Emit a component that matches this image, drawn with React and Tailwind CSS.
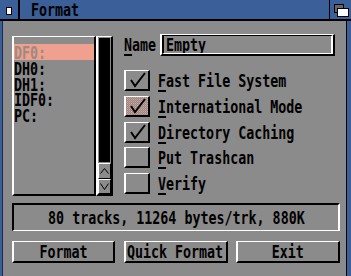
import React from "react";

const Txt = ({ children, center, className = "" }) => (
  <span
    className={`inline-block whitespace-nowrap scale-x-[0.74] ${
      center ? "origin-center" : "origin-left"
    } ${className}`}
  >
    {children}
  </span>
);

const Key = ({ children }) => (
  <span className="underline decoration-2 underline-offset-[3px]">{children}</span>
);

const Check = () => (
  <svg viewBox="0 0 22 18" className="w-full h-full">
    <polyline points="5,9 9,15 19,2" fill="none" stroke="#000" strokeWidth="2" />
  </svg>
);

const Box = ({ checked, active }) => (
  <div
    className={`w-[26px] h-[21px] shrink-0 border-l-2 border-t border-b-2 border-r-2 border-l-white border-t-white border-b-black border-r-black ${
      active
        ? "bg-[conic-gradient(#e8a090_25%,#8b8b8b_0_50%,#b89890_0_75%,#8b8b8b_0)] bg-[length:2px_2px]"
        : "bg-[#8b8b8b]"
    }`}
  >
    {checked && <Check />}
  </div>
);

const Option = ({ k, rest, checked, active }) => (
  <div className="flex items-center h-[21px]">
    <Box checked={checked} active={active} />
    <div className="ml-[8px] leading-[16px] pt-[1px]">
      <Txt>
        <Key>{k}</Key>
        {rest}
      </Txt>
    </div>
  </div>
);

const Button = ({ label, w }) => (
  <div
    className={`${w} h-[22px] shrink-0 flex items-center justify-center border-l-2 border-t border-b-2 border-r-2 border-l-white border-t-white border-b-black border-r-black leading-[16px]`}
  >
    <Txt center>{label}</Txt>
  </div>
);

export default function App() {
  const drives = ["DH0:", "DH1:", "IDF0:", "PC:"];
  return (
    <div className="w-[351px] h-[276px] flex flex-col overflow-hidden bg-[#8b8b8b] text-black font-bold text-[18px] font-['DejaVu_Sans_Mono',monospace]">
      {/* title bar */}
      <div className="h-[19px] flex bg-[#3b5f98]">
        <div className="w-[18px] shrink-0 flex items-start pl-[6px] pt-[7px]">
          <div className="w-[6px] h-[8px] bg-white border border-black" />
        </div>
        <div className="w-[2px] shrink-0 bg-black" />
        <div className="pl-[11px] leading-[19px]">
          <Txt>Format</Txt>
        </div>
        <div className="flex-1" />
        <div className="w-[1px] shrink-0 bg-black" />
        <div className="w-[21px] shrink-0">
          <svg width="21" height="19" viewBox="0 0 21 19">
            <rect x="4.5" y="4.5" width="9" height="8" fill="#666" stroke="#000" />
            <rect x="7.5" y="8.5" width="11" height="8" fill="#fff" stroke="#000" />
          </svg>
        </div>
      </div>
      <div className="h-[2px] bg-black" />

      {/* body */}
      <div className="flex-1 flex">
        <div className="w-[2px] shrink-0 bg-[#3b5f98]" />
        <div className="w-[1px] shrink-0 bg-[#1c2c48]" />
        <div className="flex-1 min-w-0 flex flex-col pl-[9px] pt-[15px]">
          <div className="flex items-start">
            {/* list */}
            <div className="w-[84px] h-[160px] shrink-0 overflow-hidden border-l-2 border-t border-b-2 border-r-2 border-l-white border-t-white border-b-black border-r-black pt-[7px] leading-[15px]">
              <div className="h-[16px] bg-[#f0a08f] text-[#9c8b80] pt-[1px]">
                <Txt>DF0:</Txt>
              </div>
              {drives.map((d) => (
                <div key={d} className="h-[15.6px] pt-[1px]">
                  <Txt>{d}</Txt>
                </div>
              ))}
            </div>
            {/* scroller */}
            <div className="w-[17px] h-[160px] shrink-0 flex flex-col border-l-2 border-t border-b-2 border-r-2 border-l-white border-t-white border-b-black border-r-black">
              <div className="flex-1 p-[1px]">
                <div className="w-full h-full bg-black" />
              </div>
              <div className="h-[16px] border-l border-t border-b border-r border-l-white border-t-white border-b-black border-r-black">
                <svg viewBox="0 0 11 14" className="w-full h-full">
                  <polyline points="1.5,9.5 5.5,4.5 9.5,9.5" fill="none" stroke="#000" strokeWidth="1" />
                </svg>
              </div>
              <div className="h-[15px] border-l border-t border-b border-r border-l-white border-t-white border-b-black border-r-black">
                <svg viewBox="0 0 11 13" className="w-full h-full">
                  <polyline points="1.5,3.5 5.5,9.5 9.5,3.5" fill="none" stroke="#000" strokeWidth="1" />
                </svg>
              </div>
            </div>

            {/* right column */}
            <div className="ml-[11px] -mt-[2px] w-[211px] shrink-0 flex flex-col">
              <div className="flex items-center h-[22px]">
                <div className="w-[36px] shrink-0 leading-[16px]">
                  <Txt>
                    <Key>N</Key>ame
                  </Txt>
                </div>
                <div className="w-[175px] h-[22px] shrink-0 border-l-2 border-t border-b-2 border-r-2 border-l-white border-t-white border-b-black border-r-black">
                  <div className="w-full h-full overflow-hidden border-l-2 border-t border-b border-r-2 border-l-black border-t-black border-b-white border-r-white pl-[2px] leading-[18px]">
                    <Txt>Empty</Txt>
                  </div>
                </div>
              </div>
              <div className="mt-[14px] flex flex-col gap-[4.75px]">
                <Option k="F" rest="ast File System" checked />
                <Option k="I" rest="nternational Mode" checked active />
                <Option k="D" rest="irectory Caching" checked />
                <Option k="P" rest="ut Trashcan" />
                <Option k="V" rest="erify" />
              </div>
            </div>
          </div>

          {/* info */}
          <div className="mt-[7px] w-[328px] h-[28px] shrink-0 flex items-center justify-center border-l-2 border-t-2 border-b border-r-2 border-l-black border-t-black border-b-white border-r-white leading-[16px]">
            <Txt center>80 tracks, 11264 bytes/trk, 880K</Txt>
          </div>

          {/* buttons */}
          <div className="mt-[10px] flex w-[328px] justify-between">
            <Button label="Format" w="w-[103px]" />
            <Button label="Quick Format" w="w-[104px]" />
            <Button label="Exit" w="w-[104px]" />
          </div>
        </div>
        <div className="w-[1px] shrink-0 bg-black" />
        <div className="w-[4px] shrink-0 bg-[#3b5f98]" />
      </div>
    </div>
  );
}
